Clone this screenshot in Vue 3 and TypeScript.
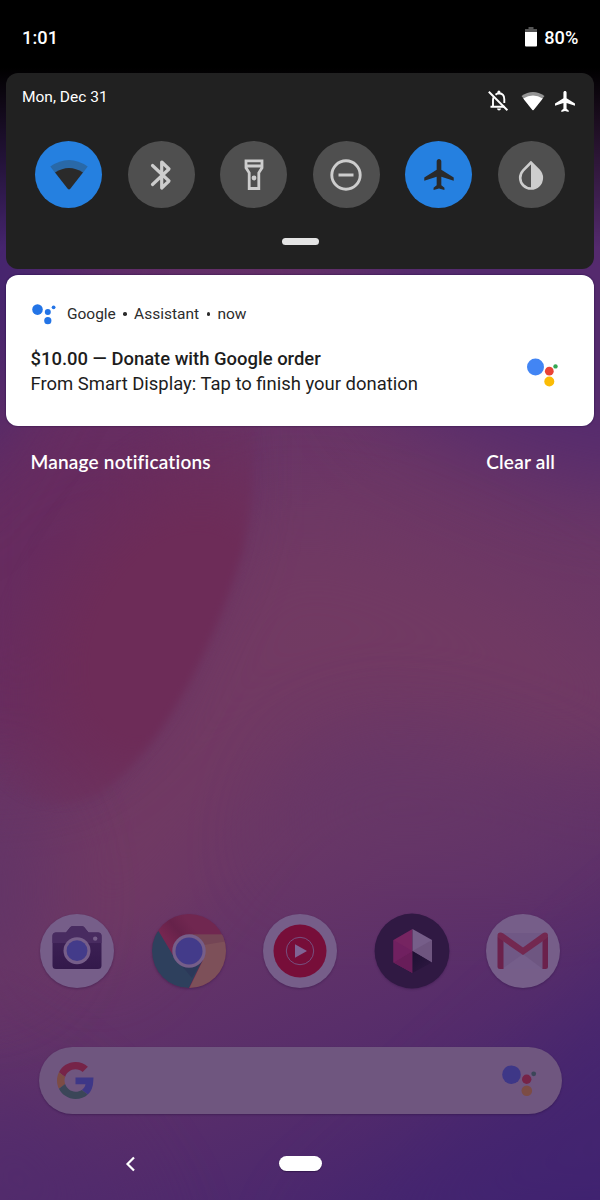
<script setup lang="ts">
    import { ref } from 'vue';

    interface Tile {
        name: string
        active: boolean
    }

    const time = ref('1:01');
    const battery = ref(80);
    const date = ref('Mon, Dec 31');

    const tiles = ref<Tile[]>([
        { name: 'wifi', active: true },
        { name: 'bluetooth', active: false },
        { name: 'flashlight', active: false },
        { name: 'dnd', active: false },
        { name: 'airplane', active: true },
        { name: 'invert', active: false },
    ]);

    const apps = ['camera', 'chrome', 'music', 'stadia', 'gmail'];

    const planePath = 'M21 16v-2l-8-5V3.500C13 2.670 12.330 2 11.500 2S10 2.670 10 3.500V9l-8 5v2l8-2.500V19l-2 1.500V22l3.500-1 3.500 1v-1.500L13 19v-5.500l8 2.500z';

    const toggleTile = (tile: Tile): void => {
        tile.active = !tile.active;
    }
</script>

<template>
    <div class="screen">
        <svg class="wallpaper" viewBox="0 0 600 1200" preserveAspectRatio="none">
            <defs>
                <linearGradient id="base" gradientUnits="userSpaceOnUse" x1="100" y1="250" x2="520" y2="1230">
                    <stop offset="0" stop-color="#602c68" />
                    <stop offset="0.3" stop-color="#6c3765" />
                    <stop offset="0.58" stop-color="#6a3766" />
                    <stop offset="0.8" stop-color="#552c6b" />
                    <stop offset="1" stop-color="#402370" />
                </linearGradient>
                <!-- petal, brightest along its lower right edge -->
                <radialGradient id="blob" gradientUnits="userSpaceOnUse" cx="0" cy="0" r="1" gradientTransform="translate(170 635) rotate(-62) scale(245 165)">
                    <stop offset="0" stop-color="#6d2c58" />
                    <stop offset="0.45" stop-color="#6d2c58" />
                    <stop offset="1" stop-color="#6d2c58" stop-opacity="0" />
                </radialGradient>
                <linearGradient id="fade" x1="0" y1="0" x2="0" y2="1">
                    <stop offset="0" stop-color="#000" />
                    <stop offset="1" stop-color="#000" stop-opacity="0" />
                </linearGradient>
                <filter id="soft" x="-50%" y="-50%" width="200%" height="200%" color-interpolation-filters="sRGB"><feGaussianBlur stdDeviation="4" /></filter>
                <filter id="wide" x="-100%" y="-100%" width="300%" height="300%" color-interpolation-filters="sRGB"><feGaussianBlur stdDeviation="45" /></filter>
            </defs>
            <rect width="600" height="1200" fill="url(#base)" />
            <path d="M330 130H720V480Q570 520 380 400Z" fill="#532a6f" opacity=".9" filter="url(#wide)" />
            <path d="M240 530Q390 500 640 680V770Q390 650 240 780L90 980L50 880Z" fill="#743b62" opacity=".75" filter="url(#wide)" />
            <path d="M310 760Q390 700 600 810V870H270Z" fill="#653768" opacity=".6" filter="url(#wide)" />
            <path d="M700 900L500 1080L300 1260H700Z" fill="#402371" opacity=".5" filter="url(#wide)" />
            <path d="M-60 1040L70 1120L160 1260H-60Z" fill="#4e2a6e" opacity=".6" filter="url(#wide)" />
            <path d="M-80 480L60 400H210V520L130 700L60 760H-80Z" fill="#672b5f" opacity=".9" filter="url(#wide)" />
            <path d="M-80 790L20 800L50 900L20 980H-80Z" fill="#5f3468" opacity=".7" filter="url(#wide)" />
            <path d="M-20 200H190Q280 390 243 550C215 648 155 765 93 797Q30 820 -20 760Z" fill="url(#blob)" filter="url(#soft)" />
            <path d="M-80 80H110L40 320L-80 520Z" fill="#42246f" filter="url(#wide)" />
            <rect width="600" height="68" fill="#000" />
            <rect y="68" width="600" height="180" fill="url(#fade)" />
        </svg>

        <header class="status-bar">
            <span>{{ time }}</span>
            <span class="battery">
                <svg width="12" height="20" viewBox="0 0 12 20">
                    <path d="M3.500 0h5v2H12v4H0V2h3.500z" fill="#555" />
                    <path d="M0 5h12v13.500q0 1-1 1H1q-1 0-1-1z" fill="#fff" />
                </svg>
                {{ battery }}%
            </span>
        </header>

        <section class="quick-settings">
            <div class="qs-top">
                <span class="date">{{ date }}</span>
                <div class="qs-icons">
                    <svg class="bell" width="22" height="22" viewBox="0 0 22 22">
                        <g fill="none" stroke="#fff" stroke-width="1.900">
                            <path d="M5.700 7.200Q5 8.500 5 10v6.500M2.500 16.800h14M7.500 4.700Q9.200 3.300 11 3.300Q16.300 3.600 16.300 9.200V13" />
                            <path d="M.8 1.800l18.600 18.400" />
                        </g>
                        <path d="M9.400 3.500V2q0-1.500 1.500-1.500T12.400 2v1.500zM9 18.500h4q-.2 2-2 2t-2-2z" fill="#fff" />
                    </svg>
                    <svg width="24" height="19" viewBox="0 0 24 19">
                        <path d="M.5 4Q12-4 23.500 4L12 18.500z" fill="#949494" />
                        <path d="M2.200 6.400Q12 .8 21.800 6.400L13 17.600q-1 1.200-2 0z" fill="#fff" />
                    </svg>
                    <svg class="plane" width="20" height="21" viewBox="2 2 19 20">
                        <path :d="planePath" fill="#fff" />
                    </svg>
                </div>
            </div>
            <div class="tiles">
                <button v-for="tile in tiles" :key="tile.name" class="tile" :class="{ active: tile.active }" @click="toggleTile(tile)">
                    <svg v-if="tile.name === 'wifi'" width="38" height="32" viewBox="0 0 38 32">
                        <path d="M.3 7.500Q19-5.500 37.700 7.500L33 13.800H5z" fill="#2969a8" />
                        <path d="M5 13.600Q19 4.400 33 13.600L20.300 29.800Q19 31.400 17.700 29.800z" fill="#2a2a2a" />
                    </svg>
                    <svg v-else-if="tile.name === 'bluetooth'" width="22" height="32" viewBox="0 0 22 32">
                        <path d="M2.500 6.500l16.500 15.500-7.300 7V3l7.300 7L2.500 25.500" fill="none" stroke="#cdcdcd" stroke-width="3.200" stroke-linejoin="round" stroke-linecap="round" />
                    </svg>
                    <svg v-else-if="tile.name === 'flashlight'" width="20" height="32" viewBox="0 0 20 32">
                        <path d="M2 1.800h16v7l-3.200 5v15.700H5.200V13.800L2 8.800zM2 7h16" fill="none" stroke="#cdcdcd" stroke-width="2.800" />
                        <circle cx="10" cy="19" r="2.400" fill="#cdcdcd" />
                    </svg>
                    <svg v-else-if="tile.name === 'dnd'" width="32" height="32" viewBox="0 0 32 32">
                        <circle cx="16" cy="16" r="14.200" fill="none" stroke="#cdcdcd" stroke-width="2.900" />
                        <path d="M8.500 16h15" stroke="#cdcdcd" stroke-width="3" />
                    </svg>
                    <svg v-else-if="tile.name === 'airplane'" width="30" height="31" viewBox="2 2 19 20">
                        <path :d="planePath" fill="#2a2a2a" />
                    </svg>
                    <svg v-else width="26" height="32" viewBox="0 0 26 32">
                        <path d="M13 3.500L5.200 11.300A10.800 10.800 0 1 0 20.800 11.300z" fill="none" stroke="#cdcdcd" stroke-width="2.600" />
                        <path d="M13 3v27A10.800 10.800 0 0 0 20.500 11.500z" fill="#cdcdcd" />
                    </svg>
                </button>
            </div>
            <div class="handle"></div>
        </section>

        <section class="notification">
            <div class="notification-app">
                <svg width="24" height="21" viewBox="0 0 24 21" fill="#2374e6">
                    <circle cx="5.500" cy="5.600" r="5.300" />
                    <circle cx="15.800" cy="7.900" r="3" />
                    <circle cx="15.800" cy="16.700" r="3.600" />
                    <circle cx="21.600" cy="3.300" r="1.900" />
                </svg>
                <span>Google</span><i></i><span>Assistant</span><i></i><span>now</span>
            </div>
            <div class="notification-content">
                <div>
                    <h1>$10.00 — Donate with Google order</h1>
                    <p>From Smart Display: Tap to finish your donation</p>
                </div>
                <svg width="31" height="29" viewBox="0 0 31 29">
                    <circle cx="8.500" cy="9" r="8.500" fill="#4285f4" />
                    <circle cx="22.300" cy="13.200" r="4.400" fill="#ea4335" />
                    <circle cx="22.300" cy="23.500" r="5" fill="#fbbc05" />
                    <circle cx="28.500" cy="8.400" r="2.200" fill="#34a853" />
                </svg>
            </div>
        </section>

        <div class="shade-actions">
            <span class="manage">Manage notifications</span>
            <span class="clear">Clear all</span>
        </div>

        <div class="dock">
            <svg v-for="app in apps" :key="app" class="app" viewBox="0 0 74 74">
                <defs>
                    <linearGradient id="camera-body" x1="0" y1="0" x2="0" y2="1">
                        <stop offset="0" stop-color="#412459" />
                        <stop offset="1" stop-color="#33194b" />
                    </linearGradient>
                    <linearGradient id="chrome-red" gradientUnits="userSpaceOnUse" x1="20" y1="32" x2="42" y2="14">
                        <stop offset="0" stop-color="#752650" />
                        <stop offset=".5" stop-color="#66224a" />
                        <stop offset="1" stop-color="#702750" />
                    </linearGradient>
                    <linearGradient id="stadia-dark" x1="0" y1="0" x2="1" y2="1">
                        <stop offset="0" stop-color="#1d1032" />
                        <stop offset="1" stop-color="#301943" />
                    </linearGradient>
                    <clipPath id="round"><circle cx="37" cy="37" r="37" /></clipPath>
                </defs>
                <template v-if="app === 'camera'">
                    <circle cx="37" cy="37" r="37" fill="#765e89" />
                    <path d="M16 18.500h10l4-5q1-1.300 2.500-1.300h9.500q1.500 0 2.500 1.300l4 5h9.500q3.500 0 3.500 3.500v29.500q0 3.500-3.500 3.500H16q-3.500 0-3.500-3.500V22q0-3.500 3.500-3.500z" fill="url(#camera-body)" />
                    <path d="M12.500 29h49v-7q0-3.500-3.500-3.500h-9.500l-4-5q-1-1.300-2.500-1.300h-9.500q-1.500 0-2.500 1.300l-4 5H16q-3.500 0-3.500 3.500z" fill="#482b60" />
                    <circle cx="37" cy="36.700" r="13.500" fill="#765e89" />
                    <circle cx="37" cy="36.700" r="10.400" fill="#433b8a" />
                    <circle cx="55.200" cy="24.600" r="2.200" fill="#765e89" />
                </template>
                <g v-else-if="app === 'chrome'" clip-path="url(#round)">
                    <rect width="74" height="74" fill="url(#chrome-red)" />
                    <path d="M6.500 17L-10 30V80H34L50.500 46L37 50L22 43z" fill="#2e405d" />
                    <path d="M37 20.400H80V80H34.500L51 46z" fill="#7d5059" />
                    <path d="M37 20.400h34l2 7L52 31z" fill="#6c3a51" opacity=".5" />
                    <path d="M29 51L45 50L50 47L40 64z" fill="#2b3457" opacity=".6" />
                    <circle cx="37" cy="37" r="16.700" fill="#765e89" />
                    <circle cx="37" cy="37" r="13.500" fill="#433b8a" />
                </g>
                <template v-else-if="app === 'music'">
                    <circle cx="37" cy="37" r="37" fill="#765e89" />
                    <circle cx="37" cy="37" r="26.500" fill="#770e39" />
                    <circle cx="37" cy="37" r="13.700" fill="none" stroke="#765080" stroke-width="1" />
                    <path d="M32 30.200v13.600L44 37z" fill="#806494" />
                </template>
                <template v-else-if="app === 'stadia'">
                    <circle cx="37" cy="37" r="37.400" fill="#301943" />
                    <path d="M37.500 15v44L18.500 48.500V26z" fill="#762461" />
                    <path d="M37.500 37L18.500 48.500L37.500 59z" fill="#681d59" />
                    <path d="M37.500 37L18.500 26V48.500z" fill="#702060" />
                    <path d="M37.500 15L57 26v22.500L37.500 37z" fill="#765e89" />
                    <path d="M37.500 37L57 26v22.500z" fill="#6e557f" />
                    <path d="M37.500 37L57 48.500L37.500 59z" fill="url(#stadia-dark)" />
                </template>
                <template v-else>
                    <circle cx="37" cy="37" r="37" fill="#765e89" />
                    <rect x="16" y="19" width="42" height="36" fill="#705885" />
                    <path d="M16 55L37 40l20 15z" fill="#755e8a" />
                    <path d="M37 40l20 15V27z" fill="#6d557f" opacity=".6" />
                    <path d="M11.500 22.500l6 .2v32.300h-3.500q-2.500 0-2.500-2.500zM62 22.500l-5.500 .2v32.300h3q2.500 0 2.500-2.500z" fill="#6b214c" />
                    <path d="M11.500 21.500q0-3 3-3q1.300 0 2.500.8L37 33.500L56.700 19.300q1.100-.8 2.300-.8q3 0 3 3q0 2-1.500 3.100L37 41L13.200 24.600Q11.500 23.500 11.500 21.500z" fill="#732850" />
                </template>
            </svg>
        </div>

        <div class="search">
            <svg width="37" height="37" viewBox="0 0 48 48">
                <path fill="#762448" d="M24 9.500c3.540 0 6.710 1.220 9.210 3.600l6.850-6.850C35.900 2.380 30.470 0 24 0 14.620 0 6.510 5.380 2.560 13.220l7.980 6.190C12.430 13.720 17.740 9.500 24 9.500z" />
                <path fill="#3e3787" d="M47.300 20H24v9.020h13c-.58 2.960-2.260 5.480-4.780 7.180l7.730 6c4.510-4.180 7.090-10.360 7.090-17.650 0-1.570.4-3.090.26-4.550z" />
                <path fill="#7c4c45" d="M10.530 28.590c-.48-1.450-.76-2.990-.76-4.590s.27-3.140.76-4.590l-7.980-6.190C.92 16.460 0 20.120 0 24c0 3.880.92 7.540 2.560 10.780l7.970-6.190z" />
                <path fill="#3b4658" d="M24 48c6.480 0 11.930-2.130 15.890-5.810l-7.730-6c-2.150 1.450-4.920 2.300-8.160 2.300-6.260 0-11.570-4.220-13.470-9.910l-7.980 6.190C6.510 42.620 14.620 48 24 48z" />
            </svg>
            <svg width="35" height="32" viewBox="0 0 35 32">
                <circle cx="9.500" cy="9.700" r="9.300" fill="#3e3787" />
                <circle cx="24.700" cy="14.200" r="4.700" fill="#762448" />
                <circle cx="24.800" cy="25.800" r="5.300" fill="#7c4c45" />
                <circle cx="31.700" cy="8.800" r="2.400" fill="#3b4658" />
            </svg>
        </div>

        <nav class="nav-bar">
            <svg width="11" height="16" viewBox="0 0 11 16">
                <path d="M9 1.500L2.500 8L9 14.500" fill="none" stroke="#fff" stroke-width="2.200" />
            </svg>
            <div class="home"></div>
        </nav>
    </div>
</template>

<style>
    body {
        margin: 0;
    }
</style>

<style scoped>
    .screen {
        position: relative;
        isolation: isolate;
        width: 600px;
        height: 1200px;
        overflow: hidden;
        display: flex;
        flex-direction: column;
        box-sizing: border-box;
        font-family: Roboto, sans-serif;
        color: #fff;
    }

    .wallpaper {
        position: absolute;
        inset: 0;
        width: 100%;
        height: 100%;
        z-index: -1;
    }

    svg {
        display: block;
        flex-shrink: 0;
    }

    .status-bar {
        height: 73px;
        padding: 1px 21.5px 0 22px;
        box-sizing: border-box;
        display: flex;
        align-items: center;
        justify-content: space-between;
        font-size: 18.2px;
        font-weight: 500;
        letter-spacing: 0.1px;
    }

    .battery {
        display: flex;
        align-items: center;
        gap: 7px;
    }

    .quick-settings {
        height: 196px;
        margin: 0 6px;
        box-sizing: border-box;
        padding: 14px 16px 0;
        border-radius: 12px;
        background: #212121;
        display: flex;
        flex-direction: column;
    }

    .qs-top {
        display: flex;
        justify-content: space-between;
        height: 54px;
    }

    .date {
        font-size: 15.5px;
        line-height: 20px;
    }

    .qs-icons {
        display: flex;
        align-items: center;
        height: 28px;
        padding-right: 3px;
    }

    .bell {
        margin-right: 11.5px;
    }

    .plane {
        margin-left: 10px;
    }

    .tiles {
        display: flex;
        justify-content: space-between;
        padding: 0 13.4px;
    }

    .tile {
        width: 67px;
        height: 67px;
        padding: 0;
        border: 0;
        border-radius: 50%;
        background: #4f4f4f;
        display: flex;
        align-items: center;
        justify-content: center;
    }

    .tile.active {
        background: #2580e0;
    }

    .handle {
        width: 37px;
        height: 7px;
        margin: 30px auto 0;
        border-radius: 4px;
        background: #e4e4e4;
    }

    .notification {
        height: 150.5px;
        margin: 6px 6px 0;
        padding: 28px 25px 0 24.5px;
        box-sizing: border-box;
        border-radius: 12px;
        background: #fff;
        color: #2c2c2c;
        box-shadow: 0 0 2px rgba(20, 0, 60, 0.8);
    }

    .notification-app {
        display: flex;
        align-items: center;
        font-size: 15.5px;
        line-height: 22px;
        padding-left: 1.4px;
    }

    .notification-app svg {
        margin-right: 11px;
    }

    .notification-app i {
        width: 3.5px;
        height: 3.5px;
        margin: 0 7.4px;
        border-radius: 50%;
        background: #2c2c2c;
    }

    .notification-content {
        display: flex;
        justify-content: space-between;
        margin-top: 22px;
        padding-right: 11px;
    }

    .notification-content svg {
        margin-top: 11px;
    }

    .notification h1,
    .notification p {
        margin: 0;
        font-size: 18.45px;
        line-height: 25px;
        color: #1d1d1d;
    }

    .notification h1 {
        font-weight: 500;
    }

    .notification p {
        font-weight: 400;
    }

    .shade-actions {
        display: flex;
        justify-content: space-between;
        margin: 24.5px 45px 0 30.5px;
        font-family: Lato, sans-serif;
        font-size: 19px;
        font-weight: 600;
        letter-spacing: 0.2px;
        line-height: 24px;
    }

    .dock {
        display: flex;
        justify-content: space-between;
        margin: 440px 40px 0 40px;
    }

    .app {
        width: 74px;
        height: 74px;
        overflow: visible;
        filter: drop-shadow(0 1px 1px rgba(40, 15, 60, 0.35));
    }

    .search {
        height: 67px;
        margin: 59px 38.5px 0;
        padding: 0 25px 0 18.5px;
        box-sizing: border-box;
        border-radius: 34px;
        background: #6f567f;
        box-shadow: 0 1px 2px rgba(40, 15, 60, 0.4);
        display: flex;
        align-items: center;
        justify-content: space-between;
    }

    .nav-bar {
        display: flex;
        align-items: center;
        height: 16px;
        margin: 41.5px 0 0 124.5px;
    }

    .home {
        width: 43px;
        height: 15.5px;
        margin-left: 143.5px;
        border-radius: 8px;
        background: #fff;
        box-shadow: 0 1px 1px rgba(30, 10, 50, 0.5);
    }
</style>
